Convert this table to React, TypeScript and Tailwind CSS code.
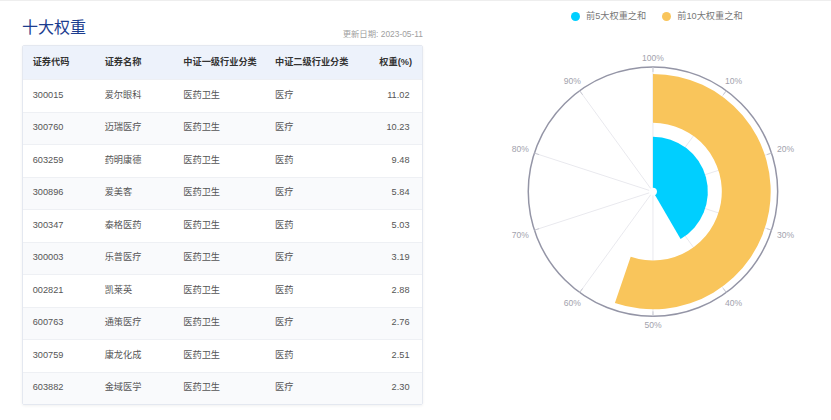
import React from 'react';

const rows = [
  { code: '300015', name: '爱尔眼科', l1: '医药卫生', l2: '医疗', w: '11.02' },
  { code: '300760', name: '迈瑞医疗', l1: '医药卫生', l2: '医疗', w: '10.23' },
  { code: '603259', name: '药明康德', l1: '医药卫生', l2: '医药', w: '9.48' },
  { code: '300896', name: '爱美客', l1: '医药卫生', l2: '医疗', w: '5.84' },
  { code: '300347', name: '泰格医药', l1: '医药卫生', l2: '医药', w: '5.03' },
  { code: '300003', name: '乐普医疗', l1: '医药卫生', l2: '医疗', w: '3.19' },
  { code: '002821', name: '凯莱英', l1: '医药卫生', l2: '医药', w: '2.88' },
  { code: '600763', name: '通策医疗', l1: '医药卫生', l2: '医疗', w: '2.76' },
  { code: '300759', name: '康龙化成', l1: '医药卫生', l2: '医药', w: '2.51' },
  { code: '603882', name: '金域医学', l1: '医药卫生', l2: '医疗', w: '2.30' },
];

const CX = 653;
const CY = 191;
const R = 125;

const pt = (r: number, deg: number) => {
  const a = (deg * Math.PI) / 180;
  return [CX + r * Math.sin(a), CY - r * Math.cos(a)];
};

const sector = (r0: number, r1: number, deg: number) => {
  const large = deg > 180 ? 1 : 0;
  const [ax, ay] = pt(r1, 0);
  const [bx, by] = pt(r1, deg);
  if (r0 <= 0) {
    return `M${CX} ${CY} L${ax} ${ay} A${r1} ${r1} 0 ${large} 1 ${bx} ${by} Z`;
  }
  const [cx, cy] = pt(r0, deg);
  const [dx, dy] = pt(r0, 0);
  return `M${ax} ${ay} A${r1} ${r1} 0 ${large} 1 ${bx} ${by} L${cx} ${cy} A${r0} ${r0} 0 ${large} 0 ${dx} ${dy} Z`;
};

const top5 = rows.slice(0, 5).reduce((s, r) => s + parseFloat(r.w), 0);
const top10 = rows.reduce((s, r) => s + parseFloat(r.w), 0);

const font = { fontFamily: '"Liberation Sans", "Noto Sans CJK SC", sans-serif' };

function WeightChart() {
  const angles = Array.from({ length: 10 }, (_, i) => i * 36);
  return (
    <svg width={386} height={388} viewBox="445 32 386 388">
      {angles.map((a) => {
        const [x, y] = pt(R, a);
        return <line key={a} x1={CX} y1={CY} x2={x} y2={y} stroke="#e9e9ee" strokeWidth={1} />;
      })}
      <path d={sector(69, 118, top10 * 3.6)} fill="#f9c55b" />
      <path d={sector(0, 55, top5 * 3.6)} fill="#00cfff" />
      <circle cx={CX} cy={CY} r={4} fill="#fff" />
      <circle cx={CX} cy={CY} r={R} fill="none" stroke="#9495a6" strokeWidth={1.5} />
      {angles.map((a) => {
        const [x1, y1] = pt(R, a);
        const [x2, y2] = pt(R - 5, a);
        return <line key={'t' + a} x1={x1} y1={y1} x2={x2} y2={y2} stroke="#c8c9d2" strokeWidth={1} />;
      })}
      {angles.map((a, i) => {
        const r = 134 + Math.abs(Math.sin((a * Math.PI) / 180)) * 6;
        const [x, y] = pt(r, a);
        return (
          <text
            key={'l' + a}
            x={x}
            y={y}
            textAnchor="middle"
            dominantBaseline="central"
            fontSize={8.6}
            fill="#a2a2ad"
            style={font}
          >
            {i === 0 ? '100%' : `${i * 10}%`}
          </text>
        );
      })}
    </svg>
  );
}

export default function App() {
  return (
    <div className="w-[831px] h-[420px] bg-white border-t border-[#eeeeee] flex overflow-hidden" style={font}>
      <div className="w-[445px] pl-[22px] pt-[8px]">
        <div className="w-[401px] flex items-end justify-between h-[29px]">
          <h1 className="text-[16px] leading-[20px] text-[#1c3d8f]">十大权重</h1>
          <span className="text-[8.4px] text-[#a0a0a0] leading-[10px] mb-[-1px]">更新日期: 2023-05-11</span>
        </div>
        <div className="mt-[7px] w-[401px] border border-[#e4e8f0] rounded-[2px] shadow-[0_1px_3px_rgba(0,0,0,0.06)] overflow-hidden">
          <div className="h-[33px] bg-[#edf2fb] grid grid-cols-[72px_78.6px_91.7px_1fr_auto] items-center pl-[9.7px] pr-[10px] text-[9.2px] font-bold text-[#333]">
            <span>证券代码</span>
            <span>证券名称</span>
            <span>中证一级行业分类</span>
            <span>中证二级行业分类</span>
            <span className="text-right">权重(%)</span>
          </div>
          {rows.map((r, i) => (
            <div
              key={r.code}
              className={`h-[32.5px] grid grid-cols-[72px_78.6px_91.7px_1fr_auto] items-center pl-[9.7px] pr-[12.5px] text-[9.2px] text-[#555] border-t border-[#eef0f4] ${
                i % 2 === 1 ? 'bg-[#f9fafc]' : 'bg-white'
              }`}
            >
              <span>{r.code}</span>
              <span>{r.name}</span>
              <span>{r.l1}</span>
              <span>{r.l2}</span>
              <span className="text-right">{r.w}</span>
            </div>
          ))}
        </div>
      </div>
      <div className="flex-1 flex flex-col">
        <div className="h-[32px] flex items-center pl-[126px] pb-[1px] text-[9.2px] text-[#777]">
          <span className="w-[9px] h-[9px] rounded-full bg-[#00cfff]" />
          <span className="ml-[6px]">前5大权重之和</span>
          <span className="ml-[16px] w-[9px] h-[9px] rounded-full bg-[#f9c55b]" />
          <span className="ml-[6px]">前10大权重之和</span>
        </div>
        <WeightChart />
      </div>
    </div>
  );
}
